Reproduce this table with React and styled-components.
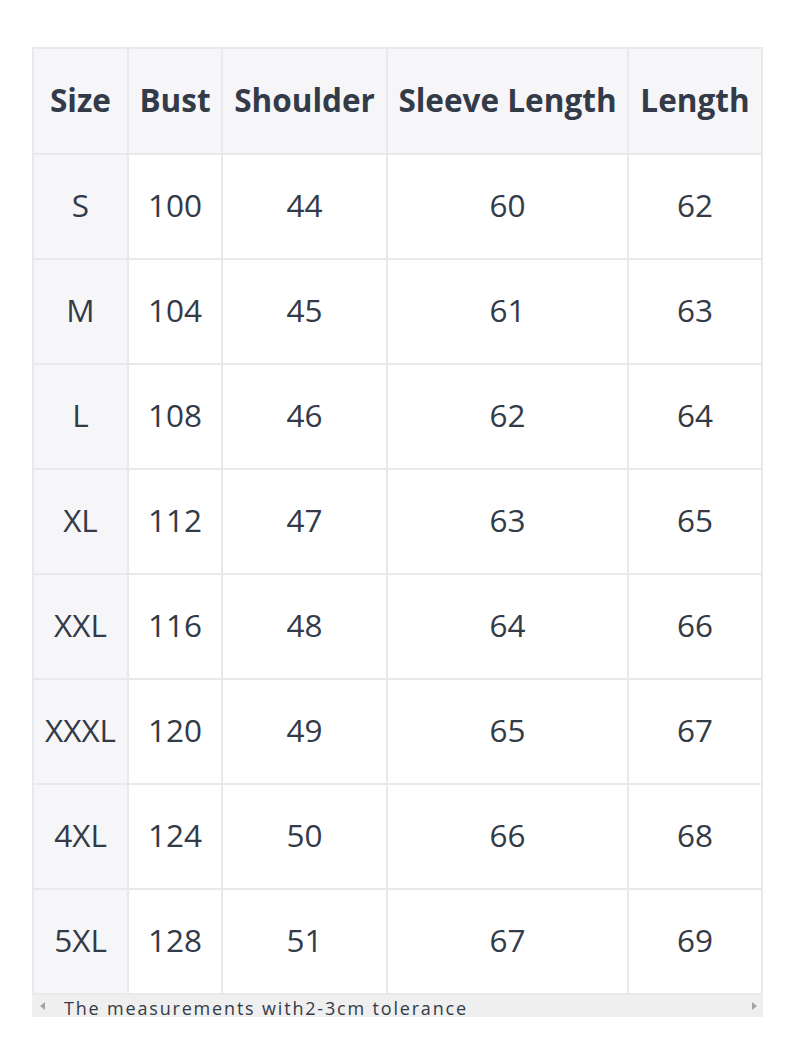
import React from 'react';
import styled, { createGlobalStyle } from 'styled-components';

const GlobalStyle = createGlobalStyle`
  body {
    margin: 0;
    background: #fff;
    font-family: "Open Sans", "Noto Sans", sans-serif;
    color: #333a48;
  }
`;

const Page = styled.div`
  padding: 47px 0 0 32px;
`;

const Wrap = styled.div`
  width: 731px;
`;

const Table = styled.table`
  border-collapse: collapse;
  table-layout: fixed;
  width: 731px;
  border: 2px solid #e9e9eb;
`;

const Th = styled.th`
  height: 100px;
  padding: 0 0 4px;
  border: 2px solid #e9e9eb;
  background: #f6f6f8;
  font-size: 31.5px;
  font-weight: 700;
  text-align: center;
  white-space: nowrap;
  color: #333a48;
`;

const Td = styled.td`
  height: 99px;
  padding: 0 0 4px;
  border: 2px solid #e9e9eb;
  background: ${(p) => (p.$first ? '#f6f6f8' : '#fff')};
  font-size: 31.5px;
  font-weight: 400;
  text-align: center;
  white-space: nowrap;
  color: #333a48;
`;

const Footer = styled.div`
  display: flex;
  align-items: center;
  height: 22px;
  background: #efefef;
`;

const Arrow = styled.span`
  width: 0;
  height: 0;
  border-top: 4px solid transparent;
  border-bottom: 4px solid transparent;
  ${(p) =>
    p.$dir === 'left'
      ? 'border-right: 5px solid #a3a3a3; margin-left: 8px;'
      : 'border-left: 5px solid #a3a3a3; margin-right: 6px; margin-left: auto;'}
`;

const Note = styled.span`
  margin-left: 19px;
  padding-top: 4px;
  font-size: 18px;
  line-height: 22px;
  letter-spacing: 1.82px;
  color: #333a48;
  white-space: nowrap;
`;

const headers = ['Size', 'Bust', 'Shoulder', 'Sleeve Length', 'Length'];
const widths = [95, 94, 165, 241, 134];

const rows = [
  ['S', 100, 44, 60, 62],
  ['M', 104, 45, 61, 63],
  ['L', 108, 46, 62, 64],
  ['XL', 112, 47, 63, 65],
  ['XXL', 116, 48, 64, 66],
  ['XXXL', 120, 49, 65, 67],
  ['4XL', 124, 50, 66, 68],
  ['5XL', 128, 51, 67, 69],
];

export default function App() {
  return (
    <Page>
      <GlobalStyle />
      <Wrap>
        <Table>
          <colgroup>
            {widths.map((w, i) => (
              <col key={i} style={{ width: w }} />
            ))}
          </colgroup>
          <thead>
            <tr>
              {headers.map((h) => (
                <Th key={h}>{h}</Th>
              ))}
            </tr>
          </thead>
          <tbody>
            {rows.map((r) => (
              <tr key={r[0]}>
                {r.map((c, i) => (
                  <Td key={i} $first={i === 0}>
                    {c}
                  </Td>
                ))}
              </tr>
            ))}
          </tbody>
        </Table>
        <Footer>
          <Arrow $dir="left" />
          <Note>The measurements with2-3cm tolerance</Note>
          <Arrow $dir="right" />
        </Footer>
      </Wrap>
    </Page>
  );
}
